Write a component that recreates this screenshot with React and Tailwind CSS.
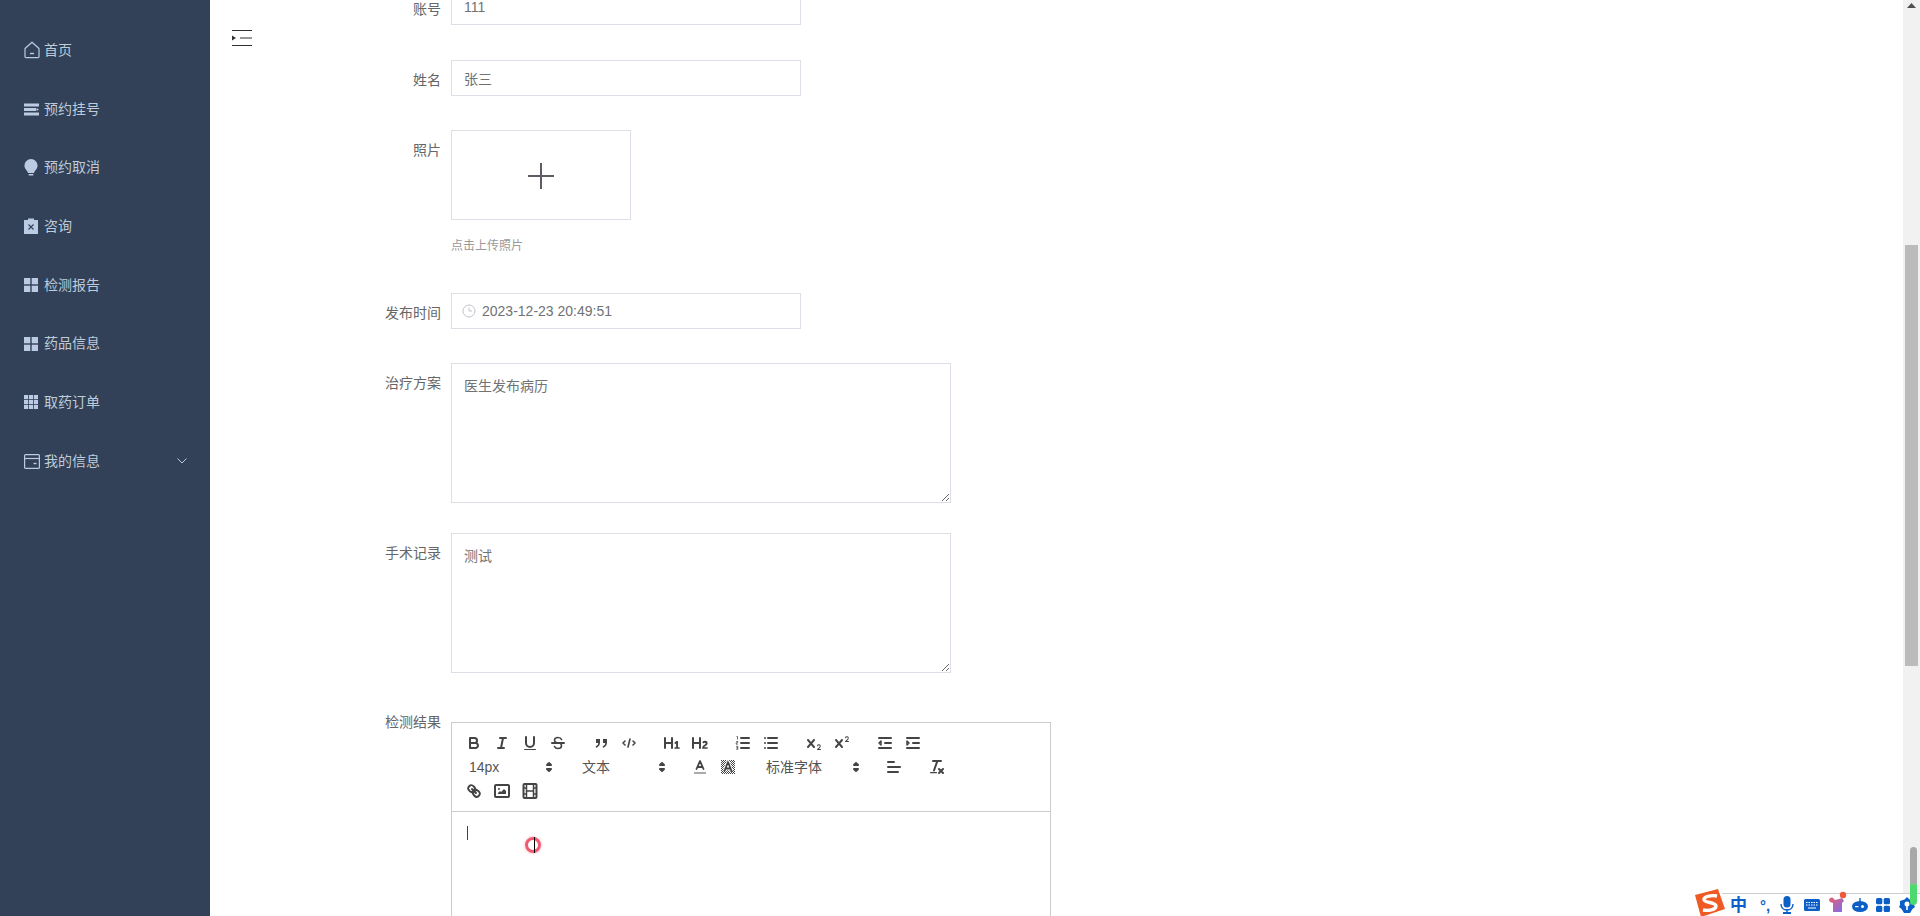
const font = { fontFamily: '"Liberation Sans", "Noto Sans CJK SC", sans-serif' };

const HomeIcon = () => (
  <svg width="16" height="18" viewBox="0 0 16 18" fill="none" stroke="currentColor" strokeWidth="1.2">
    <path d="M1 7.5 8 1.2l7 6.3v8.2a1 1 0 0 1-1 1H2a1 1 0 0 1-1-1z" strokeLinejoin="round" />
    <path d="M6 12.5h4" strokeWidth="1.4" />
  </svg>
);
const ListIcon = () => (
  <svg width="15" height="13" viewBox="0 0 15 13" fill="currentColor">
    <rect x="0" y="0.5" width="15" height="3" />
    <rect x="0" y="5" width="12" height="3" />
    <path d="M12.5 5 15 6.5 12.5 8z" />
    <rect x="0" y="9.5" width="15" height="3" />
  </svg>
);
const BulbIcon = () => (
  <svg width="14" height="17" viewBox="0 0 14 17" fill="currentColor">
    <path d="M7 0a6.6 6.6 0 0 1 6.6 6.6c0 2.6-1.6 4.4-2.8 5.6-.5.5-.6 1.2-.8 1.8H4c-.2-.6-.3-1.3-.8-1.8C2 11 .4 9.2.4 6.6A6.6 6.6 0 0 1 7 0z" />
    <rect x="4.5" y="15" width="5" height="1.4" rx="0.7" />
  </svg>
);
const ClipIcon = () => (
  <svg width="14" height="16" viewBox="0 0 14 16">
    <path fill="currentColor" d="M0 2h4V.5h6V2h4v14H0z" />
    <path stroke="#324157" strokeWidth="1.1" d="m4.5 6.5 5 5m0-5-5 5" />
  </svg>
);
const Grid2Icon = () => (
  <svg width="14" height="14" viewBox="0 0 14 14" fill="currentColor">
    <rect width="6.3" height="6.3" />
    <rect x="7.7" width="6.3" height="6.3" />
    <rect y="7.7" width="6.3" height="6.3" />
    <rect x="7.7" y="7.7" width="6.3" height="6.3" />
  </svg>
);
const Grid3Icon = () => (
  <svg width="14" height="14" viewBox="0 0 14 14" fill="currentColor">
    {[0, 5, 10].map((y) =>
      [0, 5, 10].map((x) => <rect key={`${x}-${y}`} x={x} y={y} width="4.2" height="4.2" />)
    )}
  </svg>
);
const CardIcon = () => (
  <svg width="16" height="15" viewBox="0 0 16 15" fill="none" stroke="currentColor" strokeWidth="1.2">
    <rect x="0.6" y="0.6" width="14.8" height="13.8" rx="1" />
    <path d="M.6 4.5h14.8" />
    <path d="M9.5 9.5h3" strokeWidth="1.4" />
  </svg>
);

const menu = [
  ["首页", HomeIcon],
  ["预约挂号", ListIcon],
  ["预约取消", BulbIcon],
  ["咨询", ClipIcon],
  ["检测报告", Grid2Icon],
  ["药品信息", Grid2Icon],
  ["取药订单", Grid3Icon],
  ["我的信息", CardIcon],
];

function Sidebar() {
  return (
    <aside className="w-[210px] shrink-0 bg-[#324157] pt-[21px] text-[14px] text-[#bfcbd9]">
      {menu.map(([label, Icon], i) => (
        <div key={label} className="flex h-[58.7px] items-center pl-6 pr-[23px]">
          <span className="flex w-5 shrink-0 items-center justify-start text-[#bccbe4]">
            <Icon />
          </span>
          <span>{label}</span>
          {i === menu.length - 1 && (
            <svg className="ml-auto" width="10" height="6" viewBox="0 0 10 6" fill="none" stroke="currentColor">
              <path d="m.5.5 4.5 4.5L9.500.5" />
            </svg>
          )}
        </div>
      ))}
    </aside>
  );
}

function Row({ label, className = "", children }) {
  return (
    <div className={`flex ${className}`}>
      <label className="w-[100px] shrink-0 pr-0 text-right text-[14px] leading-[40px] text-[#666]">{label}</label>
      <div className="ml-[10px]">{children}</div>
    </div>
  );
}

const inputCls =
  "block h-9 w-[350px] border border-[#dcdfe6] bg-white px-3 text-[14px] text-[#707275] outline-none";
const areaCls =
  "block h-[140px] w-[500px] resize-y border border-[#dcdfe6] bg-white px-3 py-3 text-[14px] leading-[21px] text-[#707275] outline-none";

// quill toolbar icons
const s = { stroke: "#444", strokeWidth: 2, fill: "none", strokeLinecap: "round", strokeLinejoin: "round" };
const f = { fill: "#444" };
const Q = ({ children }) => (
  <span className="flex h-6 w-7 items-center justify-center">
    <svg width="18" height="18" viewBox="0 0 18 18">
      {children}
    </svg>
  </span>
);
const Group = ({ children }) => <span className="mr-[15px] flex">{children}</span>;

const X = (
  <path {...f} d="M9.65,5.241a1,1,0,0,0-1.409.108L6,7.964,3.759,5.349A1,1,0,0,0,2.192,6.59178Q2.21541,6.6213,2.241,6.649L4.684,9.5,2.241,12.35A1,1,0,0,0,3.71,13.70722q0.02557-.02768.049-0.05722L6,11.036,8.241,13.65a1,1,0,1,0,1.567-1.24277Q9.78459,12.3777,9.759,12.35L7.316,9.5,9.759,6.651A1,1,0,0,0,9.65,5.241Z" />
);

function Picker({ label, width }) {
  return (
    <span className={`relative flex h-6 items-center pl-[9px] text-[14px] text-[#555] ${width}`}>
      {label}
      <svg className="absolute right-0 top-[3px]" width="18" height="18" viewBox="0 0 18 18">
        <polygon points="7 11 9 13 11 11" fill="none" stroke="#444" strokeWidth="2" strokeLinejoin="round" />
        <polygon points="7 7 9 5 11 7" fill="none" stroke="#444" strokeWidth="2" strokeLinejoin="round" />
      </svg>
    </span>
  );
}

function Toolbar() {
  return (
    <div className="border-b border-[#ccc] p-2">
      <div className="flex">
        <Group>
          <Q>
            <path {...s} d="M5,4H9.5A2.5,2.5,0,0,1,12,6.5v0A2.5,2.5,0,0,1,9.5,9H5V4Z" />
            <path {...s} d="M5,9h5.5A2.5,2.5,0,0,1,13,11.5v0A2.5,2.5,0,0,1,10.5,14H5V9Z" />
          </Q>
          <Q>
            <path {...s} d="M7 4h6M5 14h6M8 14l2-10" />
          </Q>
          <Q>
            <path {...s} d="M5,3V9a4.012,4.012,0,0,0,4,4H9a4.012,4.012,0,0,0,4-4V3" />
            <rect {...f} x="3" y="15" width="12" height="1" rx="0.5" />
          </Q>
          <Q>
            <path {...s} strokeWidth="1.6" d="M12.5 5.500C12 4.200 10.700 3.500 9 3.500 7 3.500 5.500 4.600 5.500 6.200c0 1.200.8 2 2 2.300" />
            <path {...s} strokeWidth="1.6" d="M5.500 12.500c.5 1.300 1.800 2 3.500 2 2 0 3.500-1.100 3.500-2.700 0-.6-.2-1.200-.6-1.800" />
            <path {...f} d="M15,10H3a1,1,0,0,1,0-2H15a1,1,0,0,1,0,2Z" />
          </Q>
        </Group>
        <Group>
          <Q>
            <rect {...f} x="4" y="5" width="4" height="4" />
            <rect {...f} x="11" y="5" width="4" height="4" />
            <path {...s} strokeWidth="1.6" d="M7.200 8.500C7.200 10.500 6 12 4.500 12.800M14.200 8.500c0 2-1.200 3.500-2.700 4.300" />
          </Q>
          <Q>
            <polyline {...s} strokeWidth="1.6" points="5 7 3 9 5 11" />
            <polyline {...s} strokeWidth="1.6" points="13 7 15 9 13 11" />
            <line {...s} strokeWidth="1.6" x1="10" x2="8" y1="5" y2="13" />
          </Q>
        </Group>
        <Group>
          <Q>
            <path {...f} d="M10,4V14a1,1,0,0,1-2,0V10H3v4a1,1,0,0,1-2,0V4A1,1,0,0,1,3,4V8H8V4a1,1,0,0,1,2,0Zm6.06787,9.209H14.98975V7.59863a.54085.54085,0,0,0-.605-.60547h-.62744a1.01119,1.01119,0,0,0-.748.29688L11.645,8.56641a.5435.5435,0,0,0-.022.8584l.28613.30762a.53861.53861,0,0,0,.84717.0332l.09912-.08789a1.2137,1.2137,0,0,0,.2417-.35254h.02246s-.01123.30859-.01123.60547V13.209H12.041a.54085.54085,0,0,0-.605.60547v.43945a.54085.54085,0,0,0,.605.60547h4.02686a.54085.54085,0,0,0,.605-.60547v-.43945A.54085.54085,0,0,0,16.06787,13.209Z" />
          </Q>
          <Q>
            <path {...f} d="M16.73975,13.81445v.43945a.54085.54085,0,0,1-.605.60547H11.855a.58392.58392,0,0,1-.64893-.60547V14.0127c0-2.90527,3.39941-3.42187,3.39941-4.55469a.77675.77675,0,0,0-.84717-.78125,1.17684,1.17684,0,0,0-.83594.38477c-.2749.26367-.561.374-.85791.13184l-.4292-.34082c-.30811-.24219-.38525-.51758-.1543-.81445a2.97155,2.97155,0,0,1,2.45361-1.17676,2.45393,2.45393,0,0,1,2.68408,2.40918c0,2.45312-3.1792,2.92676-3.27832,3.93848h2.79443A.54085.54085,0,0,1,16.73975,13.81445ZM9,3A.99974.99974,0,0,0,8,4V8H3V4A1,1,0,0,0,1,4V14a1,1,0,0,0,2,0V10H8v4a1,1,0,0,0,2,0V4A.99974.99974,0,0,0,9,3Z" />
          </Q>
        </Group>
        <Group>
          <Q>
            <path {...s} d="M7 4h8M7 9h8M7 14h8" />
            <path stroke="#444" strokeWidth="0.8" fill="none" d="M2.500 2.500h1v3M2.200 7.500h1.500v1.300h-1.500v1.400h1.600M2.200 12.300h1.600v1.500h-1.200 1.200v1.500H2.200" />
          </Q>
          <Q>
            <path {...s} d="M6 4h9M6 9h9M6 14h9M3 4h0M3 9h0M3 14h0" />
          </Q>
        </Group>
        <Group>
          <Q>
            {X}
            <path {...f} d="M15.5,15H13.861a3.858,3.858,0,0,0,1.914-2.975,1.8,1.8,0,0,0-1.6-1.751A1.921,1.921,0,0,0,12.021,11.7a0.50013,0.50013,0,1,0,.957.291h0a0.914,0.914,0,0,1,1.053-.725,0.81,0.81,0,0,1,.744.762c0,1.076-1.16971,1.86982-1.93971,2.43082A1.45639,1.45639,0,0,0,12,15.5a0.5,0.5,0,0,0,.5.5h3A0.5,0.5,0,0,0,15.5,15Z" />
          </Q>
          <Q>
            {X}
            <path {...f} d="M15.5,7H13.861a4.015,4.015,0,0,0,1.914-2.975,1.8,1.8,0,0,0-1.6-1.751A1.922,1.922,0,0,0,12.021,3.7a0.5,0.5,0,1,0,.957.291,0.917,0.917,0,0,1,1.053-.725,0.81,0.81,0,0,1,.744.762c0,1.077-1.164,1.925-1.934,2.486A1.423,1.423,0,0,0,12,7.5a0.5,0.5,0,0,0,.5.5h3A0.5,0.5,0,0,0,15.5,7Z" />
          </Q>
        </Group>
        <Group>
          <Q>
            <path {...s} d="M3 14h12M3 4h12M9 9h6" />
            <polygon {...s} strokeWidth="1.500" points="5 7 5 11 3 9 5 7" />
          </Q>
          <Q>
            <path {...s} d="M3 14h12M3 4h12M9 9h6" />
            <polygon {...s} strokeWidth="1.500" points="3 7 3 11 5 9 3 7" />
          </Q>
        </Group>
      </div>
      <div className="flex">
        <span className="mr-[15px] flex">
          <Picker label="14px" width="w-[98px]" />
        </span>
        <span className="mr-[15px] flex">
          <Picker label="文本" width="w-[98px]" />
        </span>
        <Group>
          <Q>
            <line stroke="#aaa" strokeWidth="2" x1="3" x2="15" y1="15" y2="15" />
            <path {...s} strokeWidth="1.800" d="M5.500 11 9 3l3.500 8M11.630 9H6.370" />
          </Q>
          <Q>
            <defs>
              <pattern id="hatch" width="2" height="2" patternUnits="userSpaceOnUse">
                <rect width="1" height="1" fill="#444" />
                <rect x="1" y="1" width="1" height="1" fill="#444" />
              </pattern>
            </defs>
            <rect x="2" y="2" width="14" height="14" fill="url(#hatch)" />
            <path stroke="#fff" strokeWidth="3.500" fill="none" strokeLinejoin="round" d="M5.500 13 9 4l3.500 9M11.630 10.500H6.370" />
            <path {...s} strokeWidth="1.800" d="M5.500 13 9 4l3.500 9M11.630 10.500H6.370" />
          </Q>
        </Group>
        <span className="mr-[15px] flex">
          <Picker label="标准字体" width="w-[108px]" />
        </span>
        <Group>
          <Q>
            <path {...s} d="M3 9h12M3 14h10M3 4h6" />
          </Q>
        </Group>
        <Group>
          <Q>
            <path {...s} d="M5 3h8M6 12.500 9.350 3M11 11l4 4M15 11l-4 4" />
            <rect {...f} x="2" y="14" width="7" height="1.200" rx="0.500" />
          </Q>
        </Group>
      </div>
      <div className="flex">
        <Q>
          <path {...s} d="M7 7l4 4" />
          <path {...s} d="M8.900,4.577a3.476,3.476,0,0,1,.36,4.679A3.476,3.476,0,0,1,4.577,8.900C3.185,7.500,2.035,6.400,4.217,4.217S7.500,3.185,8.900,4.577Z" />
          <path {...s} d="M13.423,9.100a3.476,3.476,0,0,0-4.679-.36,3.476,3.476,0,0,0,.36,4.679c1.392,1.392,2.500,2.542,4.679.36S14.815,10.500,13.423,9.100Z" />
        </Q>
        <Q>
          <rect {...s} x="2" y="3" width="14" height="12" rx="1" />
          <circle {...f} cx="6" cy="7" r="1" />
          <polygon {...f} points="5 12 5 11 7 9 8 10 11 7 13 9 13 12 5 12" />
        </Q>
        <Q>
          <rect {...s} x="2.500" y="2" width="13" height="14" rx="1" />
          <path {...s} strokeLinecap="butt" strokeWidth="1.500" d="M5.500 2v14M12.500 2v14M5.500 9h7M2.500 6h3M2.500 12h3M12.500 6h3M12.500 12h3" />
        </Q>
      </div>
    </div>
  );
}

function ImeBar() {
  return (
    <div className="absolute bottom-0 right-0 flex h-[23px] w-[198px] items-center border-t border-[#ccc] bg-white text-[#0c5fc6]">
      <svg className="absolute -left-[28px] -top-[5px]" width="32" height="28" viewBox="0 0 32 28">
        <path fill="#ef5a24" d="M1 6 24 0l7 20-24 8z" />
        <path fill="none" stroke="#fff" strokeWidth="3.400" d="M23 7c-5-1-13 0-13 3.500S22 13 22 17s-8 5-13 4" />
      </svg>
      <span className="ml-[8px] w-[18px] text-[17px] font-bold leading-none">中</span>
      <span className="ml-[12px] w-[14px] text-[15px] font-bold leading-none">°,</span>
      <svg className="ml-[6px]" width="14" height="18" viewBox="0 0 14 18" fill="currentColor">
        <rect x="3.500" y="0" width="7" height="11.500" rx="3.500" />
        <path fill="none" stroke="currentColor" strokeWidth="1.400" d="M1 8c0 8 12 8 12 0M7 13v3" />
        <rect x="3" y="16" width="8" height="2" />
      </svg>
      <svg className="ml-[10px]" width="16" height="12" viewBox="0 0 16 12">
        <rect width="16" height="12" rx="1.500" fill="currentColor" />
        <path stroke="#fff" strokeDasharray="1.500 1" d="M2 3.500h12M2 6h12" />
        <path stroke="#fff" d="M4 9h8" />
      </svg>
      <svg className="ml-[9px] -mt-[7px]" width="18" height="22" viewBox="0 0 18 22">
        <defs>
          <linearGradient id="shirt" x1="0" y1="0" x2="1" y2="1">
            <stop offset="0" stopColor="#e8606c" />
            <stop offset="1" stopColor="#7c6cf4" />
          </linearGradient>
        </defs>
        <path fill="url(#shirt)" d="M0 9c0-2 3-3 4-2l2 2 4-1 3-1 2 3-2 2v9H4v-9L1 11z" />
        <circle cx="14" cy="4" r="3.200" fill="#ef5a3c" />
      </svg>
      <svg className="ml-[5px]" width="16" height="14" viewBox="0 0 16 14">
        <ellipse cx="8" cy="8.500" rx="8" ry="5.500" fill="currentColor" />
        <rect x="7.300" y="0" width="1.400" height="4" fill="currentColor" />
        <circle cx="10.500" cy="8.500" r="1.500" fill="#fff" />
        <rect x="3" y="8" width="3.500" height="1.200" fill="#fff" />
      </svg>
      <svg className="ml-[8px]" width="14" height="14" viewBox="0 0 14 14" fill="currentColor">
        <rect width="6.300" height="6.300" rx="1.500" />
        <rect x="7.700" width="6.300" height="6.300" rx="1.500" />
        <rect y="7.700" width="6.300" height="6.300" rx="1.500" />
        <rect x="7.700" y="7.700" width="6.300" height="6.300" rx="1.500" />
      </svg>
      <svg className="ml-[9px]" width="16" height="16" viewBox="0 0 16 16">
        <path fill="currentColor" d="M8 0l2.500 2.500L15 4v4l1 2-2.500 2L11 16H5l-2.500-4L0 10l1-2V4l4.500-1.500z" />
        <circle cx="8" cy="7" r="2.500" fill="#fff" />
        <rect x="7.200" y="8" width="1.600" height="5" fill="#fff" />
      </svg>
    </div>
  );
}

export default function App() {
  return (
    <div className="flex h-[916px] overflow-hidden bg-white" style={font}>
      <Sidebar />
      <main className="relative min-w-0 flex-1 overflow-hidden">
        {/* collapse toggle in the fixed header */}
        <svg className="absolute left-[22px] top-[29px]" width="20" height="18" viewBox="0 0 20 18" fill="none" stroke="#303133">
          <path d="M0 1.500h20M8 9h12M0 16.500h20" />
          <path d="M0 6.500 4 9 0 11.500z" fill="#303133" stroke="none" />
        </svg>

        <form className="-mt-[11px] pl-[131px]">
          <Row label="账号">
            <input readOnly defaultValue="111" className={inputCls} />
          </Row>
          <Row label="姓名" className="mt-[31px]">
            <input readOnly defaultValue="张三" className={inputCls} />
          </Row>
          <Row label="照片" className="mt-[30px]">
            <div className="flex h-[90px] w-[180px] items-center justify-center border border-[#dcdfe6] pt-px">
              <svg width="26" height="26" viewBox="0 0 26 26" stroke="#5f5a63" strokeWidth="2">
                <path d="M0 13h26M13 0v26" />
              </svg>
            </div>
            <p className="mt-[18px] text-[12px] leading-4 text-[#999]">点击上传照片</p>
          </Row>
          <Row label="发布时间" className="mt-[39px]">
            <div className="relative">
              <svg className="absolute left-[11px] top-[11px]" width="14" height="14" viewBox="0 0 14 14" fill="none" stroke="#c0c4cc">
                <circle cx="7" cy="7" r="6" />
                <path d="M7 3.500V7h3" />
              </svg>
              <input readOnly defaultValue="2023-12-23 20:49:51" className={`${inputCls} pl-[30px]`} />
            </div>
          </Row>
          <Row label="治疗方案" className="mt-[30px]">
            <textarea readOnly defaultValue="医生发布病历" className={areaCls} />
          </Row>
          <Row label="手术记录" className="mt-[30px]">
            <textarea readOnly defaultValue="测试" className={areaCls} />
          </Row>
          <Row label="检测结果" className="mt-[29px]">
            <div className="mt-5 w-[600px] border border-[#ccc]">
              <Toolbar />
              <div className="relative h-[300px]">
                <span className="absolute left-[15px] top-[14px] h-[14px] w-px bg-[#444]" />
                {/* mouse highlight from the screen recorder */}
                <span className="absolute left-[73px] top-[25px] h-[16px] w-[16px] rounded-full border-[3px] border-[#ef5a72] shadow-[0_0_3px_#f9a8b4]" />
                <span className="absolute left-[82px] top-[25px] h-[16px] w-px bg-black" />
              </div>
            </div>
          </Row>
        </form>
      </main>

      {/* browser scrollbar */}
      <div className="w-[17px] shrink-0 bg-[#f1f1f1] px-[2px]">
        <svg className="mx-auto mt-[3px]" width="9" height="5" viewBox="0 0 9 5">
          <path d="M4.500 0 9 5H0z" fill="#505050" />
        </svg>
        <div className="mt-[237px] h-[421px] bg-[#bbb]" />
      </div>

      <ImeBar />
      <div className="absolute left-[1910px] top-[847px] h-[58px] w-[7px] rounded-full bg-gradient-to-b from-[#a8a8a8] from-[62%] to-[#4cd96e] to-[66%]" />
    </div>
  );
}
